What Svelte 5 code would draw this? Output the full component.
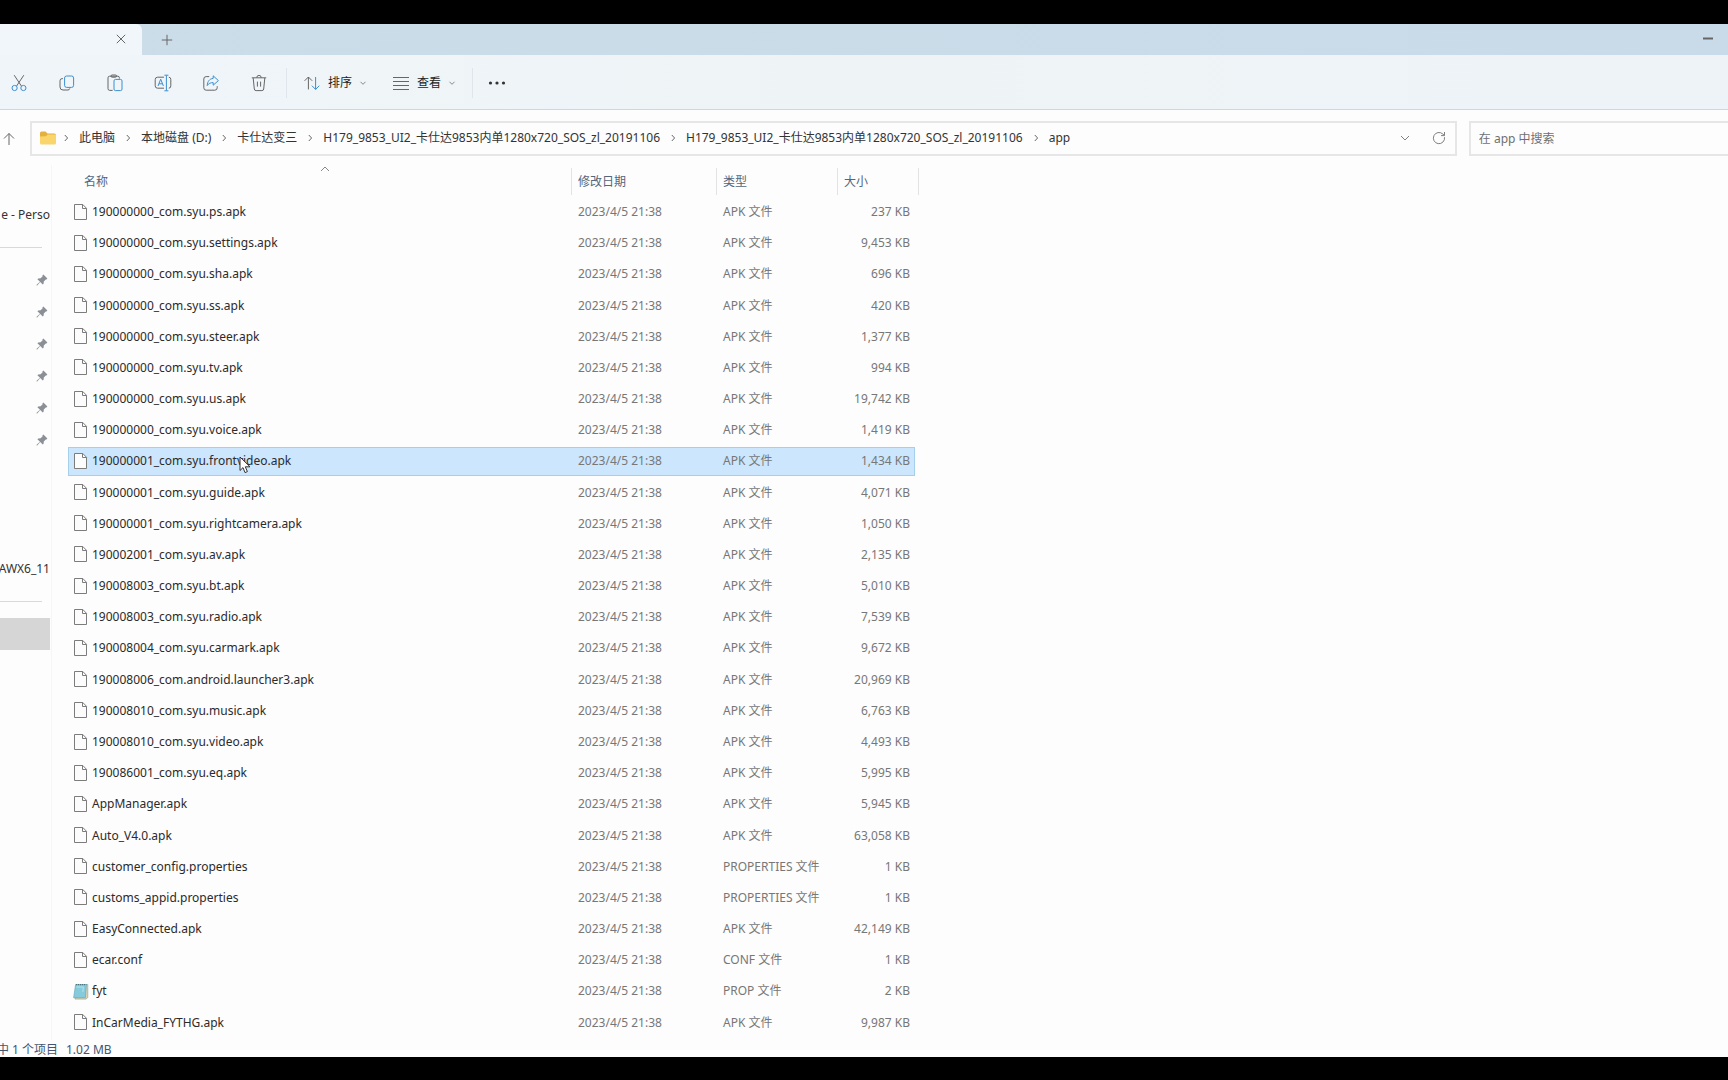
<script>
  const crumbs = [
    '此电脑',
    '本地磁盘 (D:)',
    '卡仕达变三',
    'H179_9853_UI2_卡仕达9853内单1280x720_SOS_zl_20191106',
    'H179_9853_UI2_卡仕达9853内单1280x720_SOS_zl_20191106',
    'app'
  ];

  const files = [
    ['190000000_com.syu.ps.apk', 'APK 文件', '237 KB'],
    ['190000000_com.syu.settings.apk', 'APK 文件', '9,453 KB'],
    ['190000000_com.syu.sha.apk', 'APK 文件', '696 KB'],
    ['190000000_com.syu.ss.apk', 'APK 文件', '420 KB'],
    ['190000000_com.syu.steer.apk', 'APK 文件', '1,377 KB'],
    ['190000000_com.syu.tv.apk', 'APK 文件', '994 KB'],
    ['190000000_com.syu.us.apk', 'APK 文件', '19,742 KB'],
    ['190000000_com.syu.voice.apk', 'APK 文件', '1,419 KB'],
    ['190000001_com.syu.frontvideo.apk', 'APK 文件', '1,434 KB'],
    ['190000001_com.syu.guide.apk', 'APK 文件', '4,071 KB'],
    ['190000001_com.syu.rightcamera.apk', 'APK 文件', '1,050 KB'],
    ['190002001_com.syu.av.apk', 'APK 文件', '2,135 KB'],
    ['190008003_com.syu.bt.apk', 'APK 文件', '5,010 KB'],
    ['190008003_com.syu.radio.apk', 'APK 文件', '7,539 KB'],
    ['190008004_com.syu.carmark.apk', 'APK 文件', '9,672 KB'],
    ['190008006_com.android.launcher3.apk', 'APK 文件', '20,969 KB'],
    ['190008010_com.syu.music.apk', 'APK 文件', '6,763 KB'],
    ['190008010_com.syu.video.apk', 'APK 文件', '4,493 KB'],
    ['190086001_com.syu.eq.apk', 'APK 文件', '5,995 KB'],
    ['AppManager.apk', 'APK 文件', '5,945 KB'],
    ['Auto_V4.0.apk', 'APK 文件', '63,058 KB'],
    ['customer_config.properties', 'PROPERTIES 文件', '1 KB'],
    ['customs_appid.properties', 'PROPERTIES 文件', '1 KB'],
    ['EasyConnected.apk', 'APK 文件', '42,149 KB'],
    ['ecar.conf', 'CONF 文件', '1 KB'],
    ['fyt', 'PROP 文件', '2 KB'],
    ['InCarMedia_FYTHG.apk', 'APK 文件', '9,987 KB']
  ];

  let selected = $state(8);
  let query = $state('');
  const pins = [1, 2, 3, 4, 5, 6];
</script>

{#snippet chevronDown()}
  <svg class="chev" viewBox="0 0 8 8" aria-hidden="true"><path d="M1.5 2.8 4 5.3 6.5 2.8" /></svg>
{/snippet}

<div class="window">
  <header class="tabs">
    <div class="tab">
      <button class="tab-btn" aria-label="关闭标签页">
        <svg width="10" height="10" viewBox="0 0 10 10" aria-hidden="true"><path d="M.8.8 9.2 9.2M9.2.8.8 9.2" /></svg>
      </button>
    </div>
    <button class="tab-btn new" aria-label="新建标签页">
      <svg width="12" height="12" viewBox="0 0 12 12" aria-hidden="true"><path d="M6 .8v10.4M.8 6h10.4" /></svg>
    </button>
    <button class="tab-btn min" aria-label="最小化">
      <svg width="10" height="10" viewBox="0 0 10 10" aria-hidden="true"><path d="M0 4.500h10" stroke-width="2" /></svg>
    </button>
  </header>

  <div class="toolbar" role="toolbar" aria-label="命令">
    <button class="tool" aria-label="剪切">
      <svg viewBox="0 0 18 18" aria-hidden="true">
        <path d="M4.200 1.200 11.400 12M13.800 1.200 6.600 12" />
        <g class="blue"><circle cx="4.600" cy="14" r="2.600" /><circle cx="13.400" cy="14" r="2.600" /></g>
      </svg>
    </button>
    <button class="tool" aria-label="复制">
      <svg viewBox="0 0 18 18" aria-hidden="true">
        <path d="M5 4.600H4.200a2.200 2.200 0 0 0-2.200 2.200V13a3 3 0 0 0 3 3h5a2 2 0 0 0 1.800-1.600" />
        <rect class="blue" x="6.600" y="2" width="9" height="11.400" rx="2" />
      </svg>
    </button>
    <button class="tool" aria-label="粘贴">
      <svg viewBox="0 0 18 18" aria-hidden="true">
        <path d="M6.600 16.400H3.800a1.800 1.800 0 0 1-1.800-1.800V3.800A1.600 1.600 0 0 1 3.600 2.200h8.200a1.600 1.600 0 0 1 1.600 1.600v.8" />
        <rect x="5" y="1" width="5.600" height="2.200" rx="1.100" />
        <rect class="blue" x="8" y="5.400" width="8" height="11.200" rx="1.500" />
      </svg>
    </button>
    <button class="tool" aria-label="重命名">
      <svg viewBox="0 0 18 18" aria-hidden="true">
        <path d="M10 3.200H3.600A2.400 2.400 0 0 0 1.200 5.600v6.200a2.400 2.400 0 0 0 2.400 2.400H10M14.800 3.200a2.200 2.200 0 0 1 2 2.400v6.200a2.200 2.200 0 0 1-2 2.400" />
        <path class="blue" d="M12.400 1.400v15.200M10.400 1.200h4M10.400 16.800h4M4 12l2.700-6.800L9.400 12M5 9.800h3.400" />
      </svg>
    </button>
    <button class="tool" aria-label="共享">
      <svg viewBox="0 0 18 18" aria-hidden="true">
        <path d="M7.200 2.600H4.200A2.400 2.400 0 0 0 1.800 5v8.800a2.400 2.400 0 0 0 2.400 2.400h8.600a2.400 2.400 0 0 0 2.400-2.400v-1.600" />
        <path class="blue" d="M11.200 1.800 16.400 6.600l-5.200 4.600V8.600c-2.600 0-4.600.8-6 3 .2-4 2.200-6.800 6-7.200z" />
      </svg>
    </button>
    <button class="tool" aria-label="删除">
      <svg viewBox="0 0 18 18" aria-hidden="true">
        <path d="M1.800 3.800h14.400M6.800 3.600a2.200 2.200 0 0 1 4.400 0M3.200 4l1.100 11a1.800 1.800 0 0 0 1.800 1.600h5.800a1.800 1.800 0 0 0 1.800-1.600L14.800 4M7.400 7.600v5M10.600 7.600v5" />
      </svg>
    </button>
    <span class="sep"></span>
    <button class="menu">
      <svg viewBox="0 0 18 18" aria-hidden="true">
        <path d="M5.400 15.400V3M1.600 6.800 5.400 3l3.800 3.800" />
        <path class="blue" d="M12.600 3v12.400M8.900 11.700l3.700 3.700 3.700-3.700" />
      </svg>
      <span>排序</span>
      {@render chevronDown()}
    </button>
    <button class="menu">
      <svg viewBox="0 0 18 18" aria-hidden="true"><path d="M1 3.500h16M1 7.500h16M1 11.500h16M1 15.500h16" /></svg>
      <span>查看</span>
      {@render chevronDown()}
    </button>
    <span class="sep last"></span>
    <button class="tool more" aria-label="更多">
      <svg viewBox="0 0 18 18" aria-hidden="true"><circle cx="2.500" cy="9" r="1.600" /><circle cx="9" cy="9" r="1.600" /><circle cx="15.500" cy="9" r="1.600" /></svg>
    </button>
  </div>

  <div class="location">
    <button class="icon-btn" aria-label="上移">
      <svg width="12" height="14" viewBox="0 0 12 14" aria-hidden="true"><path d="M6 13V1.500M1 6.500l5-5 5 5" /></svg>
    </button>
    <nav class="address" aria-label="地址">
      <svg class="folder" width="16" height="14" viewBox="0 0 16 14" aria-hidden="true">
        <path d="M0 2a1.500 1.500 0 0 1 1.500-1.500h4L7.500 2.500h7A1.500 1.500 0 0 1 16 4v3H0z" fill="#e5b03c" />
        <path d="M0 5.500 6 5.200 7.600 3.600H16v8.400a1.500 1.500 0 0 1-1.500 1.500h-13A1.500 1.500 0 0 1 0 12z" fill="#f9d56c" />
      </svg>
      <ol>
        {#each crumbs as crumb}
          <li>
            <svg width="8" height="8" viewBox="0 0 8 8" aria-hidden="true"><path d="m2.800 1 2.800 3-2.800 3" /></svg>
            <a href="#{crumb}">{crumb}</a>
          </li>
        {/each}
      </ol>
      <button class="icon-btn" aria-label="历史位置">
        <svg width="10" height="10" viewBox="0 0 10 10" aria-hidden="true"><path d="m1 3 4 4 4-4" /></svg>
      </button>
      <button class="icon-btn refresh" aria-label="刷新">
        <svg width="14" height="14" viewBox="0 0 14 14" aria-hidden="true"><path d="M12.500 6.200A5.600 5.600 0 1 1 10.800 3L12.300 4.400M12.500 1v3.600H9" /></svg>
      </button>
    </nav>
    <input class="search" type="search" aria-label="搜索" placeholder="在 app 中搜索" bind:value={query} />
  </div>

  <div class="content">
    <aside>
      <a class="node" href="#onedrive">e - Perso</a>
      <hr />
      <ul>
        {#each pins as pin}
          <li>
            <svg width="12" height="12" viewBox="0 0 12 12" aria-hidden="true">
              <path d="M7.400.6 11.400 4.600 10.400 5.600 9.800 5.400 7.800 7.400 7.600 9.800 6.800 10.600 4.200 8 1.200 11.400.6 11.400.6 10.800 4 7.800 1.400 5.200 2.200 4.400 4.600 4.200 6.600 2.200 6.400 1.600z" />
            </svg>
          </li>
        {/each}
      </ul>
      <a class="node drive" href="#drive">AWX6_11</a>
      <hr />
      <a class="current" href="#current" aria-label="当前位置"></a>
    </aside>

    <main>
      <table>
        <colgroup><col class="c-name" /><col class="c-date" /><col class="c-type" /><col class="c-size" /></colgroup>
        <thead>
          <tr>
            <th class="name">
              名称
              <svg class="sorted" width="10" height="6" viewBox="0 0 10 6" aria-hidden="true"><path d="m1 5 4-4 4 4" /></svg>
            </th>
            <th>修改日期</th>
            <th>类型</th>
            <th class="end">大小</th>
          </tr>
        </thead>
        <tbody>
          {#each files as [name, type, size], i}
            <tr class:selected={i === selected} onclick={() => (selected = i)}>
              <td class="name">
                <div class="file">
                  {#if name === 'fyt'}
                    <svg width="16" height="17" viewBox="0 0 16 17" aria-hidden="true">
                      <path d="M3.500 1.500h11.300v12.800l-1.600 1.800H2z" fill="#d8d3b4" stroke="#8f9a90" stroke-width=".6" />
                      <path d="M2.600 1.500h10.800l-1 13.200H.6z" fill="#86cbdc" stroke="#5da5b8" stroke-width=".6" />
                      <path d="M3 1.600h10.300" stroke="#4b7482" stroke-width="1.400" stroke-dasharray="1 1" />
                      <path d="m3.400 4 7 0-.6 5" stroke="#b5e3ec" fill="none" />
                    </svg>
                  {:else}
                    <svg width="16" height="17" viewBox="0 0 16 17" aria-hidden="true">
                      <path d="M1.500.5h8.300L13.500 4.300V15.500h-12z" fill="#fcfcfc" stroke="#7c7c7c" />
                      <path d="M9.500.5v4h4" fill="none" stroke="#7c7c7c" />
                    </svg>
                  {/if}
                  <span>{name}</span>
                  {#if i === 8}
                    <svg class="cursor" width="12" height="18" viewBox="0 0 12 18" aria-hidden="true">
                      <path d="M1 1v13.500l3-2.900 2 5 2.400-1-2.100-4.800H11z" fill="#fff" stroke="#333" />
                    </svg>
                  {/if}
                </div>
              </td>
              <td>2023/4/5 21:38</td>
              <td>{type}</td>
              <td class="size">{size}</td>
            </tr>
          {/each}
        </tbody>
      </table>
    </main>
  </div>

  <footer>
    <span class="count">中 1 个项目</span>
    <span>1.02 MB</span>
  </footer>
</div>

<style>
  :global(body) {
    background: #000;
  }

  .window,
  .window * {
    box-sizing: border-box;
  }

  .window {
    display: flex;
    flex-direction: column;
    height: 100vh;
    min-height: 900px;
    border: solid #000;
    border-width: 24px 0 23px;
    background: #fdfdfd;
    color: #333;
    font: 12px/18px 'Noto Sans', 'Noto Sans CJK SC', sans-serif;
    overflow: hidden;
  }

  button {
    display: flex;
    align-items: center;
    justify-content: center;
    padding: 0;
    border: 0;
    background: none;
    color: inherit;
    font: inherit;
  }

  a {
    color: inherit;
    text-decoration: none;
  }

  svg {
    flex: none;
    fill: none;
    stroke: #666;
  }

  .tabs {
    display: flex;
    flex: none;
    height: 31px;
    background: linear-gradient(90deg, #cbdde8, #c9dae9);
  }

  .tab {
    display: flex;
    justify-content: flex-end;
    width: 142px;
    padding-right: 9px;
    border-top-right-radius: 6px;
    background: #f1f6fa;
  }

  .tab-btn {
    width: 24px;
    height: 29px;
  }

  .tab-btn.new {
    height: 31px;
    margin-left: 13px;
  }

  .tab-btn.min {
    margin: 0 8px 0 auto;
  }

  .toolbar {
    display: flex;
    flex: none;
    align-items: center;
    gap: 16px;
    height: 55px;
    padding: 1px 0 0 3px;
    border-bottom: 1px solid #ccd8e0;
    background: linear-gradient(90deg, #f0f5f9, #eef4f6 50%, #eef3f8);
  }

  .toolbar svg {
    width: 18px;
    height: 18px;
  }

  .toolbar .blue {
    stroke: #3b8fd0;
  }

  .tool {
    width: 32px;
    height: 32px;
  }

  .more svg {
    fill: #333;
    stroke: none;
  }

  .sep {
    width: 1px;
    height: 30px;
    margin-left: -5px;
    background: #dfe5ea;
  }

  .sep.last {
    margin: 0 -8px 0 0;
  }

  .menu {
    gap: 7px;
    height: 32px;
    color: #222;
  }

  .menu:has(+ .menu) {
    margin-right: 9px;
  }

  .toolbar .chev {
    width: 8px;
    height: 8px;
    stroke: #888;
  }

  .location {
    display: flex;
    flex: none;
    gap: 12px;
    height: 55px;
    padding: 11px 0 9px;
  }

  .icon-btn {
    width: 19px;
  }

  .location > .icon-btn {
    margin-right: -1px;
    padding-right: 2px;
  }

  .address {
    display: flex;
    flex: 1;
    align-items: center;
    min-width: 0;
    padding: 0 6px 2px 8px;
    border: 2px solid #e6e6e6;
  }

  ol,
  ul {
    margin: 0;
    padding: 0;
    list-style: none;
  }

  ol {
    display: flex;
    flex: 1;
    min-width: 0;
    padding-left: 6px;
    overflow: hidden;
    white-space: nowrap;
  }

  ol li {
    display: flex;
    align-items: center;
  }

  ol svg {
    margin: 0 9px;
  }

  ol li:first-child svg {
    margin-left: 0;
  }

  .folder {
    stroke: none;
  }

  .address .icon-btn svg {
    stroke: #808080;
  }

  .refresh {
    margin-left: 15px;
  }

  .search {
    width: 15%;
    height: 35px;
    margin: 0;
    padding: 0 8px;
    border: 2px solid #e6e6e6;
    border-right: 0;
    border-radius: 0;
    background: #fdfdfd;
    color: #333;
    font: inherit;
    outline: 0;
  }

  .search::placeholder {
    color: #707070;
  }

  .content {
    display: flex;
    flex: 1;
    min-height: 0;
  }

  aside {
    flex: none;
    width: 52px;
    padding-top: 41px;
    border-right: 1px solid #f6f6f6;
  }

  .node {
    display: flex;
    justify-content: flex-end;
    width: 50px;
    overflow: hidden;
    white-space: nowrap;
  }

  hr {
    width: 42px;
    height: 1px;
    margin: 23px 0 16px;
    border: 0;
    background: #d9d9d9;
  }

  aside ul {
    display: grid;
    grid-auto-rows: 32px;
  }

  aside li {
    display: flex;
    align-items: center;
    padding-left: 36px;
  }

  aside li svg {
    fill: #8b9096;
    stroke: none;
  }

  .drive {
    margin-top: 104px;
  }

  .current {
    display: block;
    width: 50px;
    height: 32px;
    background: #d6d6d6;
  }

  main {
    flex: 1;
    min-width: 0;
    padding-left: 16px;
  }

  table {
    width: 847px;
    height: 100%;
    table-layout: fixed;
    border-collapse: separate;
    border-spacing: 0 3px;
  }

  .c-name {
    width: 503px;
  }

  .c-date {
    width: 145px;
  }

  .c-type {
    width: 121px;
  }

  .c-size {
    width: 78px;
  }

  th {
    position: relative;
    height: 27px;
    padding: 0 0 0 7px;
    color: #54657c;
    font-weight: 400;
    text-align: left;
  }

  th.name {
    padding-left: 16px;
  }

  th::after {
    content: '';
    position: absolute;
    top: 0;
    right: -1px;
    bottom: 0;
    border-right: 1px solid #e3e3e3;
  }

  th.end::after {
    right: -4px;
  }

  .sorted {
    position: absolute;
    top: -2px;
    left: 50%;
    stroke: #888;
  }

  td {
    padding: 0 0 0 7px;
    border: solid transparent;
    border-width: 1px 0;
    color: #777;
    white-space: nowrap;
  }

  td.name {
    padding-left: 4px;
    border-left-width: 1px;
    color: #2b2b2b;
  }

  td.size {
    padding: 0 4px 0 0;
    border-right-width: 1px;
    text-align: right;
  }

  .file {
    position: relative;
    display: flex;
    align-items: center;
    gap: 3px;
  }

  .selected td {
    border-color: #a5d0ec;
    background: #cbe6fd;
  }

  .cursor {
    position: absolute;
    top: 4px;
    left: 166px;
  }

  footer {
    display: flex;
    flex: none;
    gap: 8px;
    height: 17px;
    padding-top: 1px;
    color: #44566f;
    white-space: nowrap;
  }

  .count {
    display: flex;
    justify-content: flex-end;
    width: 58px;
  }
</style>
